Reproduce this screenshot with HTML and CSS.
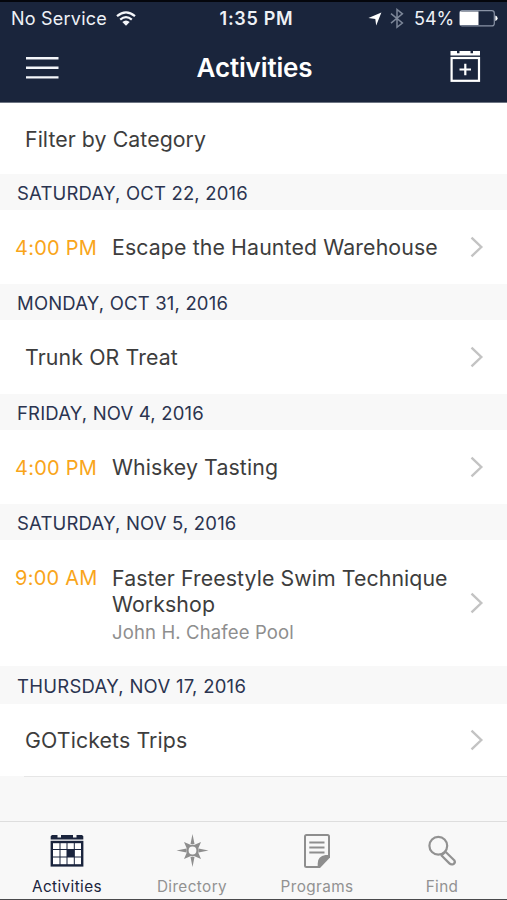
FILE: index.html
```html
<!DOCTYPE html>
<html lang="en">
<head>
<meta charset="utf-8">
<title>Activities</title>
<link rel="stylesheet" href="styles.css">
</head>
<body>
<div class="app">
  <header class="top">
    <div class="status">
      <div class="status-side">
        <span class="carrier">No Service</span>
        <svg class="wifi" width="20" height="15" viewBox="0 0 20 15" fill="none" stroke="#f4f6fa" stroke-width="2.2"><path d="M1 5.2Q10-2.6 19 5.2M4.2 8.7Q10 3.6 15.8 8.7"/><path d="M6.3 11Q10 8 13.7 11L10 14.7Z" fill="#f4f6fa" stroke="none"/></svg>
      </div>
      <span class="clock">1:35 PM</span>
      <div class="status-side status-right">
        <svg class="locate" width="14" height="14" viewBox="0 0 14 14"><path d="M13.4.5 8.2 13.6 7.3 7 .4 6.1Z" fill="#fff"/></svg>
        <svg class="bluetooth" width="14" height="21" viewBox="0 0 14 21" fill="none" stroke="#7d8799" stroke-width="1.5"><path d="M1 5.6 12.4 15 7 19.3V1.5L12.4 5.8 1 15.2"/></svg>
        <span class="percent">54%</span>
        <svg class="battery" width="39" height="17" viewBox="0 0 39 17"><rect x=".7" y=".7" width="34.6" height="15.2" rx="2.5" fill="none" stroke="#8993a5" stroke-width="1.2"/><path d="M1 1.5H19.5V15H1Z" fill="#fff"/><path d="M36.3 5.5Q38.6 6 38.6 8.3T36.3 11Z" fill="#fff"/></svg>
      </div>
    </div>
    <div class="nav">
      <svg class="menu" width="33" height="24" viewBox="0 0 33 24" stroke="#f4f6fa" stroke-width="2.4"><path d="M0 2.2H32.5M0 11.8H32.5M0 21.4H32.5"/></svg>
      <h1 class="title">Activities</h1>
      <svg class="add" width="31" height="33" viewBox="0 0 31 33"><path d="M.5 1H7V3.2H9.5V1H20.5V3.2H23V1H30V5.4H.5Z" fill="#fff"/><rect x="1.6" y="8" width="27.4" height="22.8" fill="none" stroke="#fff" stroke-width="2.2"/><path d="M9.5 19.5H21M15.3 13.7V25.3" stroke="#fff" stroke-width="2.2"/></svg>
    </div>
  </header>
  <main class="list">
    <div class="filter">Filter by Category</div>

    <h2 class="date">SATURDAY, OCT 22, 2016</h2>
    <div class="row"><span class="time">4:00 PM</span><div class="info">Escape the Haunted Warehouse</div><svg class="chev" width="14" height="22" viewBox="0 0 14 22"><path d="M1.5 1.7 11.3 11 1.5 20.3"/></svg></div>

    <h2 class="date">MONDAY, OCT 31, 2016</h2>
    <div class="row untimed"><div class="info">Trunk OR Treat</div><svg class="chev" width="14" height="22" viewBox="0 0 14 22"><path d="M1.5 1.7 11.3 11 1.5 20.3"/></svg></div>

    <h2 class="date">FRIDAY, NOV 4, 2016</h2>
    <div class="row"><span class="time">4:00 PM</span><div class="info">Whiskey Tasting</div><svg class="chev" width="14" height="22" viewBox="0 0 14 22"><path d="M1.5 1.7 11.3 11 1.5 20.3"/></svg></div>

    <h2 class="date">SATURDAY, NOV 5, 2016</h2>
    <div class="row tall"><span class="time">9:00 AM</span><div class="info">Faster Freestyle Swim Technique<br>Workshop<div class="place">John H. Chafee Pool</div></div><svg class="chev" width="14" height="22" viewBox="0 0 14 22"><path d="M1.5 1.7 11.3 11 1.5 20.3"/></svg></div>

    <h2 class="date last-date">THURSDAY, NOV 17, 2016</h2>
    <div class="row untimed last"><div class="info">GOTickets Trips</div><svg class="chev" width="14" height="22" viewBox="0 0 14 22"><path d="M1.5 1.7 11.3 11 1.5 20.3"/></svg></div>
    <div class="rule"></div>
  </main>
  <nav class="tabs">
    <div class="tab active">
      <svg width="34" height="34" viewBox="0 0 34 34"><path d="M2 1H7.5V3.6H11V1H23V3.6H26.5V1H32L33.3 2.3V5.6H.7V2.3Z" fill="#1a243d"/><rect x="1.8" y="8" width="30.4" height="23.4" fill="#fff" stroke="#1a243d" stroke-width="2.4"/><path d="M10 8V31M17 8V31M24.3 8V31M2 15.5H32M2 23H32" stroke="#1a243d" stroke-width="1"/><path d="M17 15.5H24.3V23H17Z" fill="#1a243d"/></svg>
      <span>Activities</span>
    </div>
    <div class="tab">
      <svg width="34" height="34" viewBox="0 0 34 34"><path d="M17.5 0 19.5 10H15.5ZM17.5 33 15.5 23H19.5ZM1.5 16.5 11.5 14.5V18.5ZM33.5 16.5 23.5 18.5V14.5ZM9 8 16 11 12 15ZM26 8 23 15 19 11ZM9 25 12 18 16 22ZM26 25 19 22 23 18Z" fill="#8e8e8e"/><circle cx="17.5" cy="16.5" r="5" fill="#f8f8f8" stroke="#8e8e8e" stroke-width="2.2"/></svg>
      <span>Directory</span>
    </div>
    <div class="tab">
      <svg width="34" height="34" viewBox="0 0 34 34"><path d="M6.5 0H27.5Q30 0 30 2.5V23.5L20 34H6.5Q4 34 4 31.5V2.5Q4 0 6.5 0Z" fill="#8e8e8e"/><path d="M6.5 2H27.5Q28 2 28 2.5V21H25.5Q17.7 22 17.7 29.5V32H6.5Q6 32 6 31.5V2.5Q6 2 6.5 2Z" fill="#f8f8f8"/><path d="M9.3 8.5H24.5M9.3 13.5H24.5M9.3 18.5H24.5" stroke="#8e8e8e" stroke-width="2.2"/></svg>
      <span>Programs</span>
    </div>
    <div class="tab">
      <svg width="34" height="34" viewBox="0 0 34 34" fill="none" stroke="#929292" stroke-width="2.2"><circle cx="13.3" cy="11.7" r="8.9"/><path d="M16.5 21.5 20.5 17.8 29.2 26.2Q30.8 28.4 28.6 30Q26.2 31.2 24.4 29.4Z" stroke-linejoin="round"/></svg>
      <span>Find</span>
    </div>
  </nav>
</div>
</body>
</html>
```

FILE: styles.css
```css
* { box-sizing: border-box; }
body { margin: 0; font-family: Inter, "Liberation Sans", sans-serif; background: #f8f8f8; color: #3d3d3d; }
.app { width: 507px; height: 900px; display: flex; flex-direction: column; overflow: hidden; border-bottom: 1px solid #4a4a4c; }
.top { height: 103px; flex: none; background: #1a253c; border-top: 2px solid #04060c; border-bottom: 1px solid #6d7583; color: #fff; }
.status { height: 33px; display: grid; grid-template-columns: 1fr auto 1fr; align-items: center; padding: 0 9px 0 11px; font-size: 18px; line-height: 33px; color: #eef1f6; white-space: nowrap; }
.status-side { display: flex; align-items: center; }
.status-right { justify-content: flex-end; }
.carrier { letter-spacing: .22px; }
.wifi { margin-left: 9px; }
.clock { padding-left: 4px; font-weight: 600; letter-spacing: .7px; }
.bluetooth { margin-left: 8px; }
.percent { margin-left: 10px; letter-spacing: -.1px; }
.battery { margin-left: 5px; }
.nav { height: 66px; display: flex; align-items: center; justify-content: space-between; padding: 0 26px; }
.add { margin-top: -3px; }
.title { margin: 0; font-size: 26px; line-height: 32px; font-weight: 600; letter-spacing: -.15px; }
.list { flex: 1; }
.filter { height: 71px; background: #fff; padding: 0 25px; font-size: 21.3px; line-height: 73px; letter-spacing: .07px; }
.date { height: 36px; margin: 0; padding-left: 17px; font-size: 18.5px; line-height: 38px; font-weight: 400; letter-spacing: .17px; color: #2b3450; background: #f8f8f8; }
.row { height: 74px; display: flex; align-items: center; background: #fff; padding: 0 23px 0 15px; font-size: 21.3px; line-height: 26px; letter-spacing: .12px; white-space: nowrap; }
.untimed { padding-left: 25px; }
.time { width: 97px; flex: none; padding-top: 1px; color: #f9a51a; font-size: 20px; letter-spacing: .25px; }
.info { flex: 1; }
.chev { flex: none; fill: none; stroke: #c3c3c3; stroke-width: 2.4; }
.tall { height: 126px; letter-spacing: .08px; }
.tall .time { align-self: flex-start; margin-top: 24px; }
.tall .info { padding-top: 5px; }
.place { font-size: 18.5px; line-height: 30px; letter-spacing: .13px; color: #8e8e8e; }
.last-date { height: 38px; line-height: 40px; letter-spacing: .26px; }
.last { height: 72px; }
.rule { height: 1px; margin-left: 24px; background: #e6e6e6; }
.tabs { height: 78px; flex: none; display: grid; grid-template-columns: repeat(4, 125px); padding-left: 4px; border-top: 1px solid #dedede; background: #f8f8f8; }
.tab { display: flex; flex-direction: column; align-items: center; padding-top: 12px; font-size: 15.3px; line-height: 18px; letter-spacing: .4px; color: #929292; }
.tab span { margin-top: 10px; padding-left: 1px; }
.active { color: #1a243d; }
```
